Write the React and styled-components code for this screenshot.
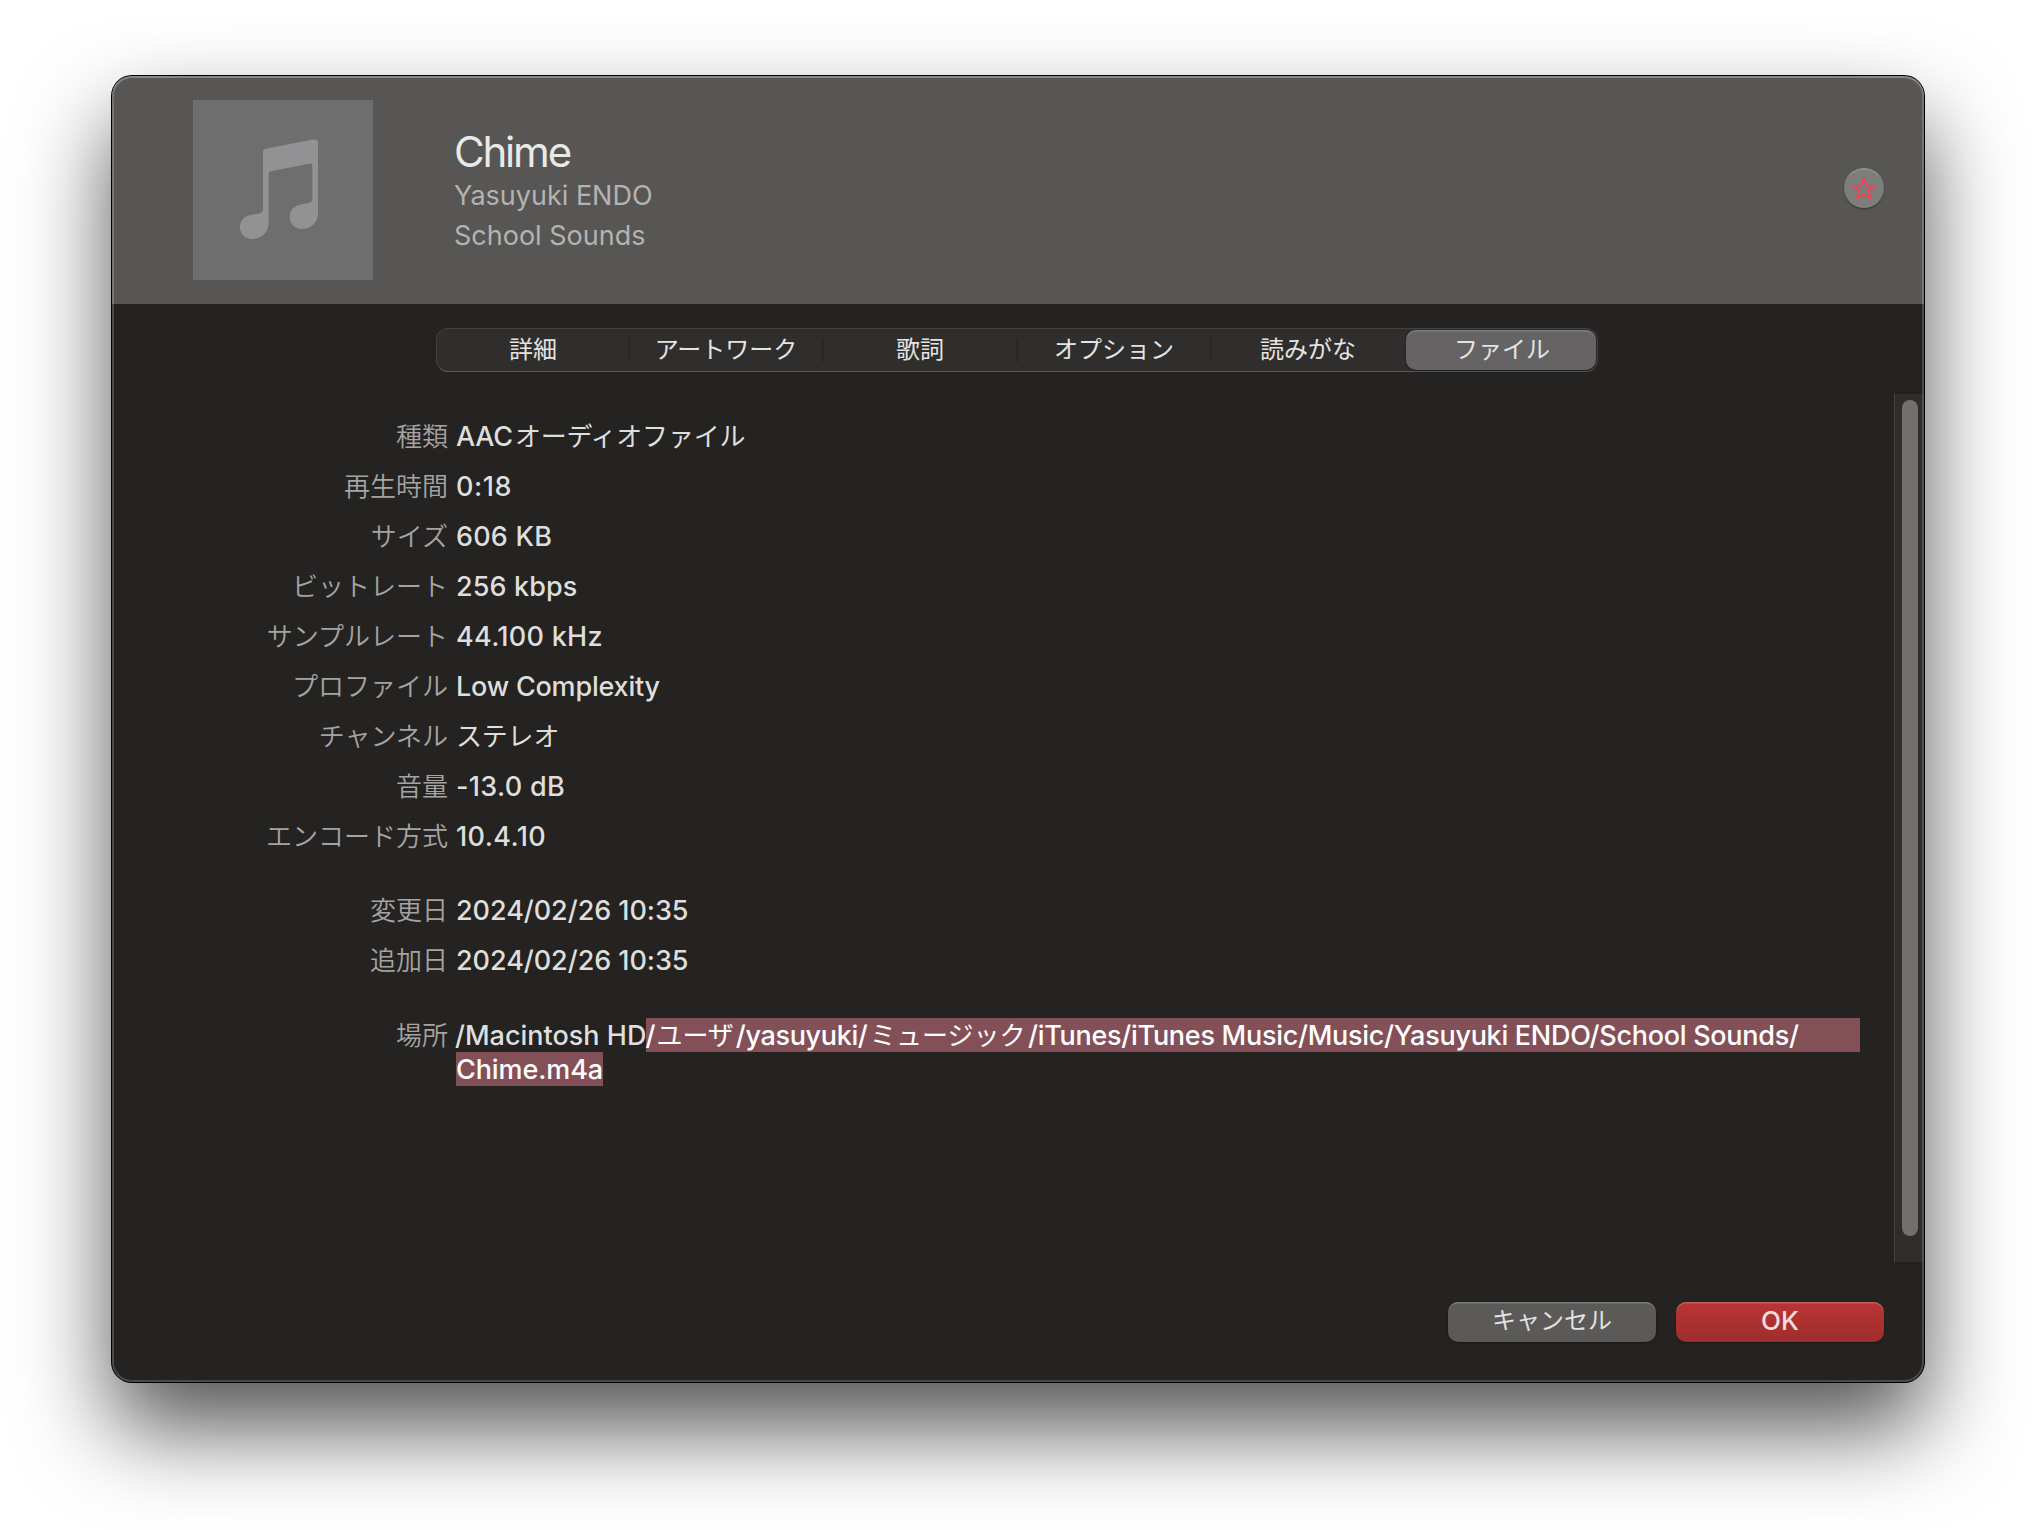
import React from "react";
import styled, { createGlobalStyle } from "styled-components";

const GlobalStyle = createGlobalStyle`
  * { box-sizing: border-box; }
  body {
    margin: 0;
    background: #fff;
    font-family: Inter, "Noto Sans CJK JP", sans-serif;
  }
`;

const Desktop = styled.main`
  width: 2036px;
  height: 1530px;
  padding: 76px 112px 0;
  overflow: hidden;
  background: #fff;
`;

const Window = styled.section`
  position: relative;
  display: flex;
  flex-direction: column;
  height: 1306px;
  border-radius: 20px;
  background: #242321;
  box-shadow: 0 0 0 1px #000, 0 46px 90px rgba(0, 0, 0, 0.68);

  &::after {
    content: "";
    position: absolute;
    inset: 0;
    border-radius: inherit;
    pointer-events: none;
    box-shadow: inset 0 0 0 2px rgba(255, 255, 255, 0.18),
      inset 0 2px 0 rgba(255, 255, 255, 0.14);
  }
`;

const Header = styled.header`
  display: flex;
  align-items: flex-start;
  height: 228px;
  flex: none;
  padding: 24px 40px 0 81px;
  border-radius: 20px 20px 0 0;
  background: #575654;
`;

const Artwork = styled.div`
  width: 180px;
  height: 180px;
  background: #6e6e6e;
  color: #929294;

  svg { display: block; }
`;

const TrackInfo = styled.div`
  flex: 1;
  margin-left: 81px;
  padding-top: 28px;
`;

const Title = styled.h1`
  margin: 0;
  color: #e9e9e8;
  font-size: 42px;
  font-weight: 385;
  line-height: 48px;
  letter-spacing: -2.2px;
`;

const Subtitle = styled.p`
  margin: 0;
  color: #b3b3b1;
  font-size: 27px;
  font-weight: 440;
  line-height: 40px;
`;

const FavoriteButton = styled.button`
  display: grid;
  place-items: center;
  width: 40px;
  height: 40px;
  margin-top: 68px;
  padding: 0;
  border: 0;
  border-radius: 50%;
  background: #7d7d7c;
  color: #f24252;
  box-shadow: inset 0 2px 0 -0.5px rgba(255, 255, 255, 0.18), 0 1px 2px rgba(0, 0, 0, 0.35);
`;

const Tabs = styled.nav`
  display: grid;
  grid-template-columns: 190px repeat(4, 194px) 192px;
  flex: none;
  align-self: flex-start;
  width: 1162px;
  height: 44px;
  margin: 24px 0 22px 324px;
  padding: 1px;
  border: 1px solid #42413f;
  border-bottom-color: #5b5a58;
  border-radius: 12px;
  background: #2f2e2c;
`;

const Tab = styled.button`
  position: relative;
  height: 40px;
  margin-left: ${(p) => (p.$active ? 2 : 0)}px;
  padding: 0 0 1px ${(p) => (p.$shifted ? 2 : 0)}px;
  border: 0;
  border-radius: 10px;
  background: ${(p) => (p.$active ? "#656364" : "transparent")};
  box-shadow: ${(p) =>
    p.$active ? "inset 0 1.5px 0 rgba(255,255,255,.16), 0 1px 2px rgba(0,0,0,.5)" : "none"};
  color: #e4e4e3;
  font: 400 24px/39px Inter, "Noto Sans CJK JP", sans-serif;

  &::after {
    content: "";
    display: ${(p) => (p.$divided ? "block" : "none")};
    position: absolute;
    top: 8px;
    right: -2px;
    width: 2px;
    height: 24px;
    background: #282725;
  }
`;

const Body = styled.div`
  display: flex;
  flex: none;
  height: 868px;
`;

const Details = styled.dl`
  flex: 1;
  margin: 0;
  padding: 18px 34px 0 0;
`;

const Group = styled.div`
  margin-bottom: 24px;
`;

const Row = styled.div`
  display: grid;
  grid-template-columns: 336px 1fr;
  column-gap: 8px;
  line-height: ${(p) => p.$leading || 50}px;
  margin-top: ${(p) => p.$offset || 0}px;
`;

const Label = styled.dt`
  color: #a5a4a3;
  font-size: 26px;
  font-weight: 350;
  text-align: right;
`;

const Value = styled.dd`
  margin: 0;
  color: #dededd;
  font-size: 27px;
  font-weight: 450;
  letter-spacing: ${(p) => p.$tracking || 0}px;
  white-space: nowrap;
`;

const Kana = styled.span`
  margin: 0 ${(p) => p.$after || 0}px 0 ${(p) => p.$before || 0}px;
  font-size: 26px;
  font-weight: 400;
  line-height: 0;
`;

const PathLine = styled.div`
  display: flex;
  height: 34px;
  line-height: 36px;
`;

const PathPart = styled.span`
  margin-left: ${(p) => p.$pull || 0}px;
  letter-spacing: ${(p) => p.$tracking || 0}px;
`;

const Selection = styled.span`
  flex: ${(p) => (p.$fill ? 1 : "none")};
  background: #845058;
  color: #fff;
  letter-spacing: ${(p) => p.$tracking || 0}px;
`;

const ScrollTrack = styled.div`
  width: 30px;
  padding: 6px 6px 26px 7px;
  border-left: 1px solid #41403e;
  background: #2f2e2c;
`;

const ScrollThumb = styled.div`
  width: 16px;
  height: 836px;
  border-radius: 8px;
  background: #71706e;
`;

const Actions = styled.footer`
  display: flex;
  justify-content: flex-end;
  gap: 20px;
  padding: 40px 40px 0 0;
`;

const ActionButton = styled.button`
  width: 208px;
  height: 40px;
  padding: 0 0 3px;
  border: 0;
  border-radius: 10px;
  background: ${(p) => (p.$primary ? "linear-gradient(#bb3535, #9e2d2d)" : "#5b5a58")};
  box-shadow: inset 0 1.5px 0 rgba(255, 255, 255, 0.2), 0 1px 2px rgba(0, 0, 0, 0.4);
  color: ${(p) => (p.$primary ? "#f4dcdc" : "#e2e2e1")};
  font: ${(p) => (p.$primary ? "450 26px" : "400 24px")}/37px Inter, "Noto Sans CJK JP", sans-serif;
`;

const tabs = ["詳細", "アートワーク", "歌詞", "オプション", "読みがな", "ファイル"];

const audioInfo = [
  ["種類", <>AAC<Kana $before={2}>オーディオファイル</Kana></>, -0.2],
  ["再生時間", "0:18", 0.6],
  ["サイズ", "606 KB", 0.2],
  ["ビットレート", "256 kbps", 0.1],
  ["サンプルレート", "44.100 kHz", 0.3],
  ["プロファイル", "Low Complexity", -0.2],
  ["チャンネル", <Kana>ステレオ</Kana>, -0.2],
  ["音量", "-13.0 dB", 0.3],
  ["エンコード方式", "10.4.10", 0.4],
];

const dateInfo = [
  ["変更日", "2024/02/26 10:35", -0.05],
  ["追加日", "2024/02/26 10:35", -0.05],
];

function InfoGroup({ rows }) {
  return (
    <Group>
      {rows.map(([label, value, tracking]) => (
        <Row key={label}>
          <Label>{label}</Label>
          <Value $tracking={tracking}>{value}</Value>
        </Row>
      ))}
    </Group>
  );
}

function MusicNote() {
  return (
    <svg width="180" height="180" viewBox="-111 -90 540 540" fill="currentColor">
      <path d="M99 67Q99 58 108 56L245 29Q264 27 264 37V250C264 278 243 297 216 297C195 297 179 282 179 261C179 238 196 226 216 223L234 220Q247 217 247 207V107Q247 99 239 101L122 124Q116 125 116 131V277C116 307 95 327 67 327C45 327 30 311 30 292C30 270 45 256 66 254L86 251Q99 248 99 238Z" />
    </svg>
  );
}

function Star() {
  return (
    <svg width="40" height="40" viewBox="0 0 40 40" fill="none" stroke="currentColor" strokeWidth="1.9" strokeLinejoin="round">
      <path d="M20 10L22.6 17.7L30.9 17.9L24.4 22.9L26.8 30.8L20 26.2L13.2 30.8L15.6 22.9L9.1 17.9L17.4 17.7Z" />
    </svg>
  );
}

export default function App() {
  return (
    <Desktop>
      <GlobalStyle />
      <Window>
        <Header>
          <Artwork><MusicNote /></Artwork>
          <TrackInfo>
            <Title>Chime</Title>
            <Subtitle>Yasuyuki ENDO</Subtitle>
            <Subtitle>School Sounds</Subtitle>
          </TrackInfo>
          <FavoriteButton><Star /></FavoriteButton>
        </Header>
        <Tabs>
          {tabs.map((name, i) => (
            <Tab key={name} $active={i === 5} $divided={i < 4} $shifted={i > 0}>{name}</Tab>
          ))}
        </Tabs>
        <Body>
          <Details>
            <InfoGroup rows={audioInfo} />
            <InfoGroup rows={dateInfo} />
            <Row $leading={36} $offset={32}>
              <Label>場所</Label>
              <Value>
                <PathLine>
                  <PathPart $pull={-1}>/Macintosh HD</PathPart>
                  <Selection $fill>
                    <PathPart $pull={-1}>/</PathPart>
                    <Kana $before={1} $after={2}>ユーザ</Kana>
                    <PathPart $tracking={-0.35}>/yasuyuki/</PathPart>
                    <Kana $before={2.5} $after={2.5}>ミュージック</Kana>
                    <PathPart $tracking={-0.28}>/iTunes/iTunes Music/Music/Yasuyuki ENDO/School Sounds/</PathPart>
                  </Selection>
                </PathLine>
                <PathLine>
                  <Selection $tracking={-0.1}>Chime.m4a</Selection>
                </PathLine>
              </Value>
            </Row>
          </Details>
          <ScrollTrack><ScrollThumb /></ScrollTrack>
        </Body>
        <Actions>
          <ActionButton>キャンセル</ActionButton>
          <ActionButton $primary>OK</ActionButton>
        </Actions>
      </Window>
    </Desktop>
  );
}
